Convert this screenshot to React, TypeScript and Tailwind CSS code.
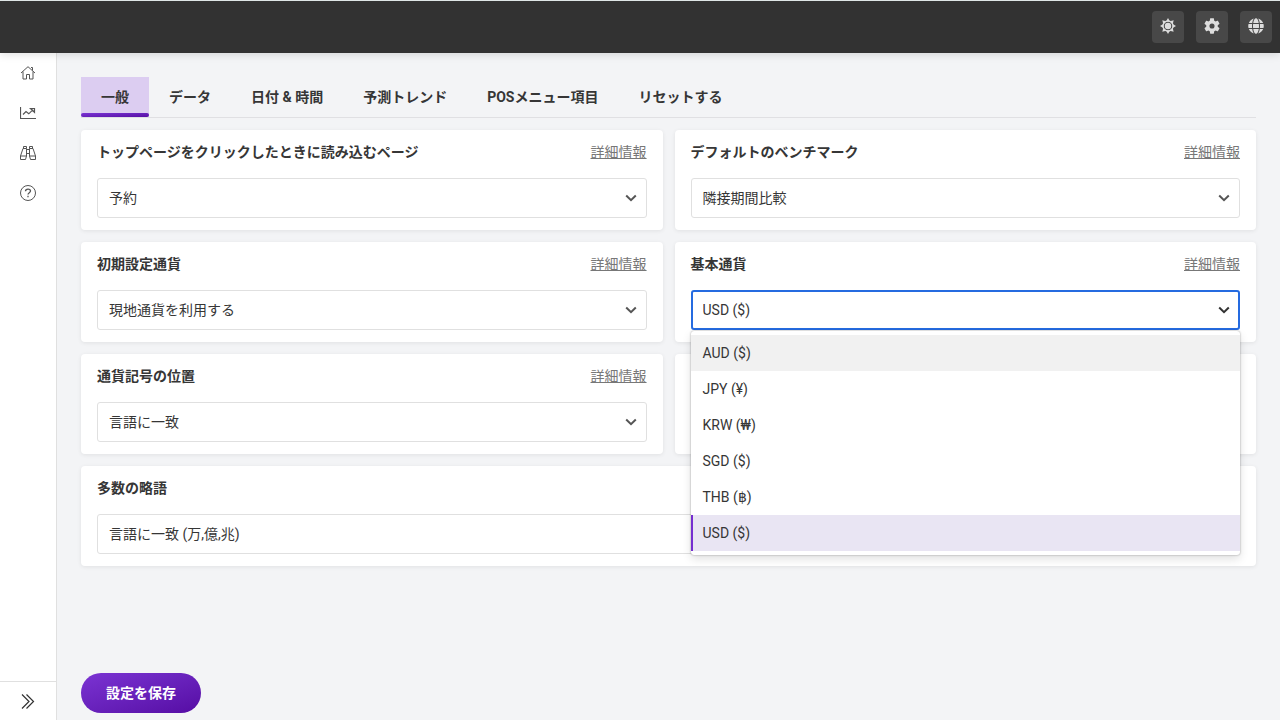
import React from "react";

type IconProps = { className?: string };

const SunIcon: React.FC<IconProps> = ({ className }) => (
    <svg viewBox="0 0 16 16" className={className} fill="currentColor" aria-hidden="true">
        {[0, 45, 90, 135, 180, 225, 270, 315].map((angle) => (
            <path key={angle} d="M8 0 L10 3.4 H6 Z" transform={`rotate(${angle} 8 8)`} />
        ))}
        <circle cx="8" cy="8" r="5" fill="none" stroke="currentColor" strokeWidth="1.3" />
        <circle cx="8" cy="8" r="3.2" />
    </svg>
);

const GearIcon: React.FC<IconProps> = ({ className }) => (
    <svg viewBox="2 2 20 20" className={className} fill="currentColor" aria-hidden="true">
        <path d="M19.14 12.94c.04-.3.06-.61.06-.94 0-.32-.02-.64-.07-.94l2.03-1.58c.18-.14.23-.41.12-.61l-1.92-3.32c-.12-.22-.37-.29-.59-.22l-2.39.96c-.5-.38-1.03-.7-1.62-.94l-.36-2.54c-.04-.24-.24-.41-.48-.41h-3.84c-.24 0-.43.17-.47.41l-.36 2.54c-.59.24-1.13.57-1.62.94l-2.39-.96c-.22-.08-.47 0-.59.22L2.74 8.87c-.12.21-.08.47.12.61l2.03 1.58c-.05.3-.09.63-.09.94s.02.64.07.94l-2.03 1.58c-.18.14-.23.41-.12.61l1.92 3.32c.12.22.37.29.59.22l2.39-.96c.5.38 1.03.7 1.62.94l.36 2.54c.05.24.24.41.48.41h3.84c.24 0 .44-.17.47-.41l.36-2.54c.59-.24 1.13-.56 1.62-.94l2.39.96c.22.08.47 0 .59-.22l1.92-3.32c.12-.22.07-.47-.12-.61l-2.01-1.58zM12 15.2a3.2 3.2 0 1 1 0-6.4 3.2 3.2 0 0 1 0 6.4z" />
    </svg>
);

const GlobeIcon: React.FC<IconProps> = ({ className }) => (
    <svg viewBox="0 0 496 512" className={className} fill="currentColor" aria-hidden="true">
        <path d="M336.500 160C322 70.700 287.800 8 248 8s-74 62.700-88.500 152h177zM152 256c0 22.200 1.200 43.500 3.300 64h185.300c2.100-20.500 3.300-41.800 3.300-64s-1.200-43.500-3.300-64H155.300c-2.100 20.500-3.300 41.800-3.300 64zm324.700-96c-28.600-67.900-86.500-120.400-158-141.600 24.400 33.800 41.200 84.700 50 141.600h108zM177.200 18.400C105.800 39.600 47.800 92.100 19.300 160h108c8.700-56.900 25.500-107.800 49.900-141.600zM487.400 192H372.700c2.100 21 3.300 42.500 3.300 64s-1.200 43-3.300 64h114.600c5.500-20.500 8.600-41.800 8.600-64s-3.100-43.500-8.500-64zM120 256c0-21.500 1.200-43 3.300-64H8.600C3.200 212.500 0 233.800 0 256s3.200 43.500 8.600 64h114.600c-2-21-3.200-42.500-3.200-64zm39.500 96c14.500 89.300 48.700 152 88.500 152s74-62.700 88.500-152h-177zm159.300 141.600c71.400-21.200 129.400-73.700 158-141.600h-108c-8.800 56.900-25.600 107.800-50 141.600zM19.300 352c28.600 67.900 86.500 120.400 158 141.600-24.400-33.800-41.200-84.700-50-141.600h-108z" />
    </svg>
);

const HomeIcon: React.FC<IconProps> = ({ className }) => (
    <svg viewBox="0 0 16 16" className={className} fill="none" stroke="currentColor" aria-hidden="true">
        <path d="M1 8 8 1.700 15 8M12.500 5.500V2.500h-1.500M3 6.500V14h3.500V9.500h3V14H13V6.500" />
    </svg>
);

const TrendIcon: React.FC<IconProps> = ({ className }) => (
    <svg viewBox="0 0 16 16" className={className} fill="none" stroke="currentColor" aria-hidden="true">
        <path d="M.5 2v11.500H16" strokeWidth="1.200" />
        <path d="M3 9.500 6 6.500l2.800 2.300L13 4.600M10.500 3.500h4v3.800z" strokeWidth="1.200" />
    </svg>
);

const BinocularsIcon: React.FC<IconProps> = ({ className }) => (
    <svg viewBox="0 0 16 16" className={className} fill="none" stroke="currentColor" aria-hidden="true">
        <path d="M3.500 3.500V1.500h3v2M9.500 3.500V1.500h3v2M3 3.500h3.500V11L5.500 14.500H.5V11zM13 3.500H9.500V11l1 3.500h5V11zM.5 11h6M9.500 11h6M6.500 4.500h3M6.500 8.500h3" />
    </svg>
);

const HelpIcon: React.FC<IconProps> = ({ className }) => (
    <svg viewBox="0 0 16 16" className={className} fill="none" stroke="currentColor" aria-hidden="true">
        <circle cx="8" cy="8" r="7.500" />
        <path d="M5.500 6.300c0-1.400 1-2.200 2.500-2.200s2.500.8 2.500 2c0 1.600-2.500 1.600-2.500 3.400M8 10.800v1.400" strokeWidth="1.300" />
    </svg>
);

const ExpandIcon: React.FC<IconProps> = ({ className }) => (
    <svg viewBox="0 0 16 16" className={className} fill="none" stroke="currentColor" strokeWidth="1.200" aria-hidden="true">
        <path d="M2 1.500l7 7-7 7M6.500 1.500l7 7-7 7" />
    </svg>
);

const ChevronIcon: React.FC<IconProps> = ({ className }) => (
    <svg viewBox="0 0 12 12" className={className} fill="none" stroke="currentColor" strokeWidth="2" aria-hidden="true">
        <path d="M1.200 3.500 6 8.200l4.800-4.700" />
    </svg>
);

const tabs = ["一般", "データ", "日付 & 時間", "予測トレンド", "POSメニュー項目", "リセットする"];

const currencies = ["AUD ($)", "JPY (¥)", "KRW (₩)", "SGD ($)", "THB (฿)", "USD ($)"];

const navItems = [
    { label: "ホーム", Icon: HomeIcon },
    { label: "トレンド", Icon: TrendIcon },
    { label: "検索", Icon: BinocularsIcon },
    { label: "ヘルプ", Icon: HelpIcon },
];

const headerItems = [
    { label: "テーマ", Icon: SunIcon },
    { label: "設定", Icon: GearIcon },
    { label: "言語", Icon: GlobeIcon },
];

type SettingCardProps = {
    id: string;
    title: string;
    value: string;
    options?: string[];
    open?: boolean;
    wide?: boolean;
};

const SettingCard: React.FC<SettingCardProps> = ({ id, title, value, options = [value], open, wide }) => {
    return (
        <div className={`rounded bg-white px-4 pt-3 pb-3 shadow-[0_1px_4px_rgba(0,0,0,0.08)] ${wide ? "col-span-2" : ""}`}>
            <div className="flex h-5 items-center justify-between">
                <label htmlFor={id} className="font-bold">{title}</label>
                {!wide && <a href="#" className="text-[#777777] underline">詳細情報</a>}
            </div>
            <div className="relative mt-4">
                <select
                    id={id}
                    defaultValue={value}
                    className={`block h-10 w-full appearance-none rounded-[3px] bg-white outline-none ${open ? "border-2 border-[#256be0] px-[10px]" : "border border-[#e0e0e0] px-[11px]"}`}
                >
                    {options.map((option) => (
                        <option key={option} value={option}>{option}</option>
                    ))}
                </select>
                <ChevronIcon className={`pointer-events-none absolute top-[14px] right-[10px] h-3 w-3 ${open ? "text-[#323232]" : "text-[#555555]"}`} />
                {open && (
                    <ul role="listbox" aria-label={title} className="absolute inset-x-0 top-full z-10 mt-px rounded-[3px] bg-white py-1 shadow-[0_0_2px_rgba(0,0,0,0.4),0_4px_10px_rgba(0,0,0,0.12)]">
                        {options.map((option, index) => (
                            <li
                                key={option}
                                role="option"
                                aria-selected={option === value}
                                className={`flex h-9 items-center border-l-2 px-[10px] ${option === value ? "border-[#752ed0] bg-[#e9e5f3]" : index === 0 ? "border-[#f1f1f1] bg-[#f1f1f1]" : "border-white"}`}
                            >
                                {option}
                            </li>
                        ))}
                    </ul>
                )}
            </div>
        </div>
    );
};

const App: React.FC = () => {
    return (
        <div className="flex min-h-screen flex-col bg-[#f3f4f6] font-['Roboto','Noto_Sans_CJK_JP',sans-serif] text-sm text-[#363636]">
            <header className="z-10 flex h-[53px] items-center justify-end gap-3 border-t border-[#dfe6e6] bg-[#323232] px-2 shadow-[0_2px_8px_rgba(0,0,0,0.12)]">
                {headerItems.map(({ label, Icon }) => (
                    <button key={label} type="button" aria-label={label} className="flex h-8 w-8 items-center justify-center rounded bg-[#484848] pb-0.5 text-[#dddddd]">
                        <Icon className="h-4 w-4" />
                    </button>
                ))}
            </header>

            <div className="flex flex-1">
                {/* Sidebar */}
                <nav className="flex w-[57px] shrink-0 flex-col border-r border-[#e0e0e0] bg-white text-[#555555]">
                    {navItems.map(({ label, Icon }) => (
                        <a key={label} href="#" aria-label={label} className="flex h-10 items-center justify-center">
                            <Icon className="h-4 w-4" />
                        </a>
                    ))}
                    <button type="button" aria-label="メニューを開く" className="mt-auto flex h-[39px] items-center justify-center border-t border-[#e0e0e0] text-[#323232]">
                        <ExpandIcon className="h-4 w-4" />
                    </button>
                </nav>

                {/* Settings */}
                <main className="flex min-w-0 flex-1 flex-col px-6 pt-6 pb-[7px]">
                    <div role="tablist" className="flex border-b border-[#e0e0e3]">
                        {tabs.map((tab, index) => (
                            <button
                                key={tab}
                                type="button"
                                role="tab"
                                aria-selected={index === 0}
                                className={`relative h-10 px-5 font-bold ${index === 0 ? "bg-[#dccdf1]" : ""}`}
                            >
                                {tab}
                                {index === 0 && <span className="absolute inset-x-0 bottom-0 h-1 rounded-xs bg-linear-to-br from-[#7b33d3] to-[#560ba4]" />}
                            </button>
                        ))}
                    </div>

                    <div className="mt-3 grid grid-cols-2 gap-3">
                        <SettingCard id="home-page" title="トップページをクリックしたときに読み込むページ" value="予約" />
                        <SettingCard id="benchmark" title="デフォルトのベンチマーク" value="隣接期間比較" />
                        <SettingCard id="default-currency" title="初期設定通貨" value="現地通貨を利用する" />
                        <SettingCard id="base-currency" title="基本通貨" value="USD ($)" options={currencies} open />
                        <SettingCard id="symbol-position" title="通貨記号の位置" value="言語に一致" />
                        <div className="rounded bg-white shadow-[0_1px_4px_rgba(0,0,0,0.08)]" />
                        <SettingCard id="abbreviation" title="多数の略語" value="言語に一致 (万,億,兆)" wide />
                    </div>

                    <button type="button" className="mt-auto h-10 w-[120px] rounded-full bg-linear-to-br from-[#7b33d3] to-[#560ba4] font-bold text-white">
                        設定を保存
                    </button>
                </main>
            </div>
        </div>
    );
};

export default App;
